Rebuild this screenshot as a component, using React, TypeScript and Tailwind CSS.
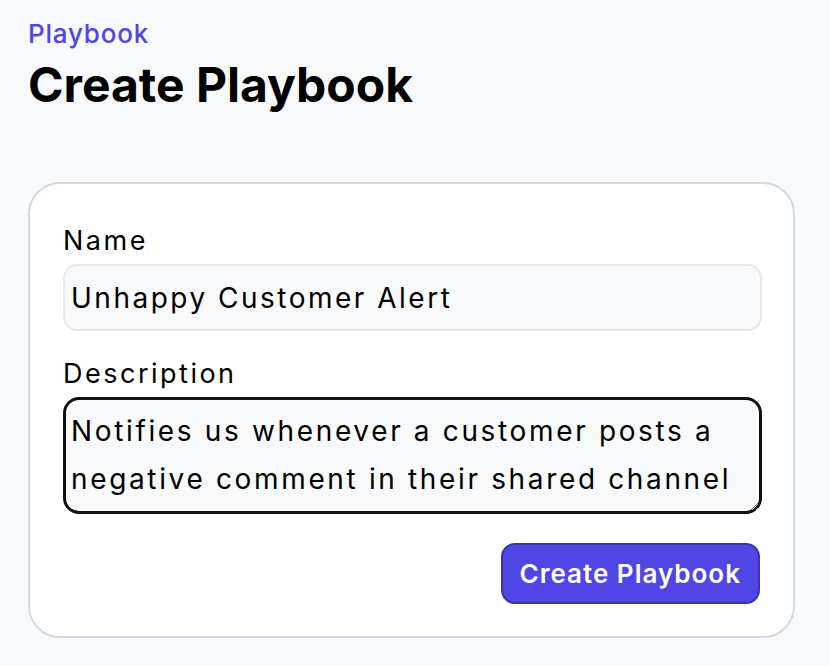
import React, { useState } from 'react';

const App: React.FC = () => {
  const [name, setName] = useState('Unhappy Customer Alert');
  const [description, setDescription] = useState(
    'Notifies us whenever a customer posts a negative comment in their shared channel'
  );

  return (
    <div className="min-h-screen bg-[#f8f9fb] px-[28px] pt-[17px] font-['Inter',sans-serif] text-black">
      <p className="text-[26px] font-medium leading-[34px] tracking-[0.8px] text-[#4f46e5]">Playbook</p>
      <h1 className="mt-[6px] text-[48px] font-bold leading-[56px]">Create Playbook</h1>

      {/* Form card */}
      <form
        className="mt-[69px] w-[767px] rounded-[32px] border-2 border-[#cfd8e3] bg-white px-[33px] pb-[32px] pt-[40px]"
        onSubmit={(e) => e.preventDefault()}
      >
        <label className="block text-[27px] leading-[34px] tracking-[2.5px]">Name</label>
        <input
          value={name}
          onChange={(e) => setName(e.target.value)}
          className="mt-[6px] block h-[67px] w-[699px] rounded-[14px] border-2 border-[#e6e8ec] bg-[#f8f9fb] px-[6px] text-[28px] tracking-[2.5px] outline-none"
        />

        <label className="mt-[26px] block text-[27px] leading-[34px] tracking-[2.5px]">Description</label>
        <textarea
          value={description}
          onChange={(e) => setDescription(e.target.value)}
          rows={2}
          spellCheck={false}
          className="mt-[6px] block h-[117px] w-[699px] resize-y rounded-[16px] border-[3px] border-[#111111] bg-[#f8f9fb] px-[5px] py-[7px] text-[28px] leading-[48px] tracking-[2.65px] outline-none"
        />

        <div className="mt-[29px] flex justify-end">
          <button
            type="submit"
            className="h-[61px] rounded-[14px] border-2 border-[#3b34b0] bg-[#4f46e5] px-[17px] text-[26px] font-semibold tracking-[1px] text-white"
          >
            Create Playbook
          </button>
        </div>
      </form>
    </div>
  );
};

export default App;
